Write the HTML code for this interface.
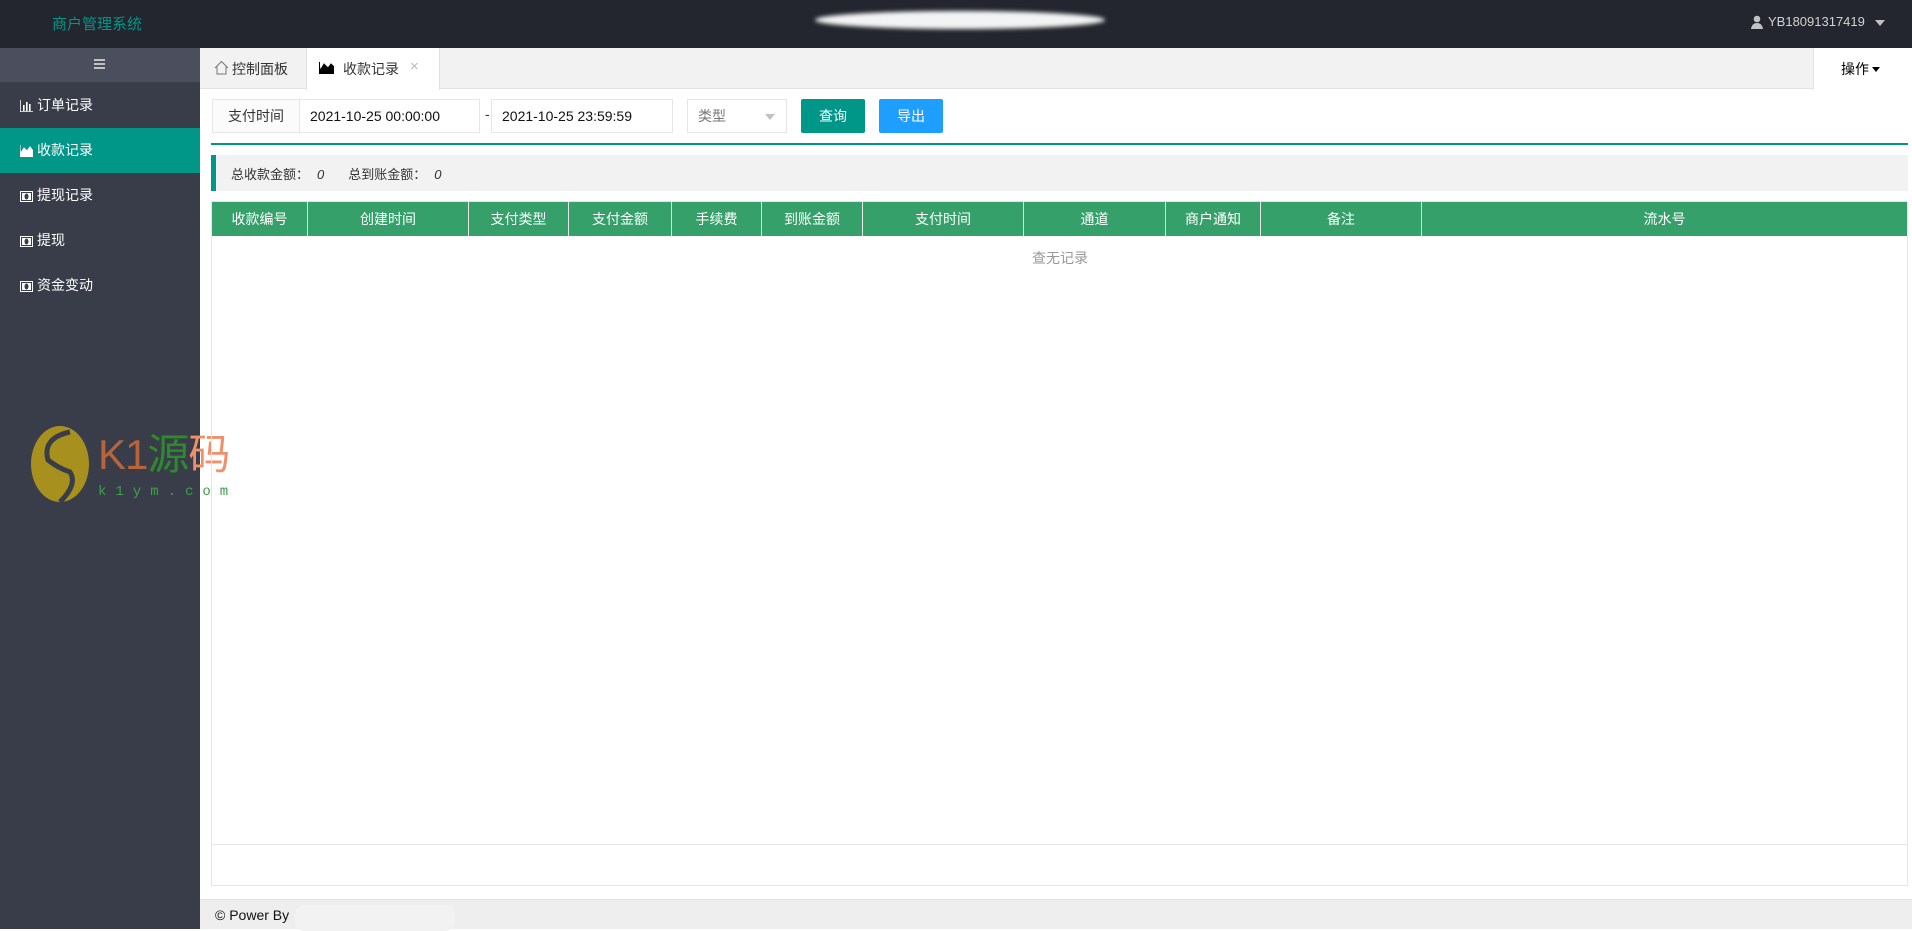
<!DOCTYPE html>
<html><head><meta charset="utf-8"><style>
*{margin:0;padding:0;box-sizing:border-box}
body{width:1912px;height:929px;position:relative;overflow:hidden;background:#fff;font-family:"Liberation Sans","Noto Sans CJK SC",sans-serif;font-size:14px;color:#333}
.a{position:absolute}
.hdr{left:0;top:0;width:1912px;height:48px;background:#23262e}
.side{left:0;top:48px;width:200px;height:881px;background:#393d49}
.mi{position:absolute;left:0;width:200px;height:45px;line-height:45px;color:#fff;font-size:14px;padding-left:20px}
.mi svg{vertical-align:-2px;margin-right:4px}
.th{position:absolute;top:0;height:34px;line-height:34px;text-align:center;color:#fff;font-size:14px;border-right:1px solid #e6e6e6}
</style></head><body>
<div class="a hdr"></div>
<div class="a" style="left:52px;top:13px;color:#009688;font-size:15px">商户管理系统</div>
<div class="a" style="left:815px;top:11px;width:290px;height:18px;background:#fff;border-radius:50%;filter:blur(2px);opacity:.95"></div>
<svg class="a" style="left:1751px;top:15px" width="12" height="14" viewBox="0 0 12 14"><circle cx="6" cy="4" r="3.3" fill="#c2c2c2"/><path d="M0 14 Q1 8 6 8 Q11 8 12 14Z" fill="#c2c2c2"/></svg>
<div class="a" style="left:1768px;top:14px;color:#d2d2d2;font-size:13px">YB18091317419</div>
<div class="a" style="left:1875px;top:20px;width:0;height:0;border-left:5px solid transparent;border-right:5px solid transparent;border-top:6px solid #c2c2c2"></div>

<div class="a side"></div>
<div class="a" style="left:0;top:48px;width:200px;height:34px;background:#4a4e5d"></div>
<div class="a" style="left:94px;top:59px;width:11px;height:2px;background:#c2c2c2;box-shadow:0 4px 0 #c2c2c2,0 8px 0 #c2c2c2"></div>
<div class="mi" style="top:83px"><svg width="13" height="12"><path d="M0 0V12H13" stroke="#fff" stroke-width="1.5" fill="none"/><rect x="3" y="5" width="1.6" height="6" fill="#fff"/><rect x="6" y="2" width="1.6" height="9" fill="#fff"/><rect x="9" y="4" width="1.6" height="7" fill="#fff"/></svg>订单记录</div>
<div class="mi" style="top:128px;background:#009688"><svg width="13" height="12"><path d="M0 0V12H13V6L10 2L7 6L4 3L1 8" stroke="#fff" fill="#fff"/></svg>收款记录</div>
<div class="mi" style="top:173px"><svg width="13" height="11"><rect x=".5" y=".5" width="12" height="10" fill="none" stroke="#fff"/><rect x="2" y="2" width="9" height="7" fill="#fff"/><ellipse cx="6.5" cy="5.5" rx="2" ry="3" fill="#393d49"/></svg>提现记录</div>
<div class="mi" style="top:218px"><svg width="13" height="11"><rect x=".5" y=".5" width="12" height="10" fill="none" stroke="#fff"/><rect x="2" y="2" width="9" height="7" fill="#fff"/><ellipse cx="6.5" cy="5.5" rx="2" ry="3" fill="#393d49"/></svg>提现</div>
<div class="mi" style="top:263px"><svg width="13" height="11"><rect x=".5" y=".5" width="12" height="10" fill="none" stroke="#fff"/><rect x="2" y="2" width="9" height="7" fill="#fff"/><ellipse cx="6.5" cy="5.5" rx="2" ry="3" fill="#393d49"/></svg>资金变动</div>

<!-- watermark -->
<svg class="a" style="left:30px;top:424px" width="62" height="80"><ellipse cx="30" cy="40" rx="29" ry="38" fill="#a8901f"/><path d="M40 8 Q12 14 18 36 Q28 44 40 48 Q48 60 30 78" stroke="#393d49" stroke-width="5" fill="none"/></svg>
<div class="a" style="left:98px;top:432px;font-size:42px;color:#b8643a;line-height:46px;letter-spacing:-1px">K1<span style="color:#2e8a2e">源</span><span style="color:#f0906a">码</span></div>
<div class="a" style="left:98px;top:484px;font-size:14px;color:#3aa04a;letter-spacing:9px;font-family:'Liberation Mono',monospace">k1ym.com</div>

<!-- tabs -->
<div class="a" style="left:200px;top:48px;width:1712px;height:41px;background:#f2f2f2;border-bottom:1px solid #e2e2e2"></div>
<svg class="a" style="left:214px;top:60px" width="15" height="15"><path d="M1 8L7.5 1.5L14 8M3 6.5V14H12V6.5" stroke="#777" fill="none"/></svg>
<div class="a" style="left:232px;top:59px;font-size:14px;color:#333">控制面板</div>
<div class="a" style="left:306px;top:48px;width:134px;height:42px;background:#fff;border-left:1px solid #e2e2e2;border-right:1px solid #e2e2e2"></div>
<svg class="a" style="left:319px;top:62px" width="15" height="12"><path d="M0.5 0V11.5H15V5L12 2L9 6L5 2L1.5 8" stroke="#000" fill="#000"/></svg>
<div class="a" style="left:343px;top:59px;font-size:14px;color:#333">收款记录</div>
<div class="a" style="left:410px;top:58px;font-size:15px;color:#bbb">×</div>
<div class="a" style="left:1813px;top:48px;width:99px;height:42px;background:#fff;border-left:1px solid #e2e2e2"></div>
<div class="a" style="left:1841px;top:59px;font-size:14px;color:#000">操作</div>
<div class="a" style="left:1872px;top:67px;border-left:4px solid transparent;border-right:4px solid transparent;border-top:5px solid #000"></div>

<!-- search -->
<div class="a" style="left:212px;top:99px;width:88px;height:34px;background:#fbfbfb;border:1px solid #e6e6e6;line-height:32px;text-align:center;font-size:14px">支付时间</div>
<div class="a" style="left:299px;top:99px;width:181px;height:34px;border:1px solid #e6e6e6;line-height:32px;padding-left:10px;font-size:14px;color:#111">2021-10-25 00:00:00</div>
<div class="a" style="left:485px;top:106px;font-size:14px">-</div>
<div class="a" style="left:491px;top:99px;width:182px;height:34px;border:1px solid #e6e6e6;line-height:32px;padding-left:10px;font-size:14px;color:#111">2021-10-25 23:59:59</div>
<div class="a" style="left:687px;top:99px;width:100px;height:34px;border:1px solid #e6e6e6;line-height:32px;padding-left:10px;font-size:14px;color:#777">类型</div>
<div class="a" style="left:765px;top:114px;border-left:5px solid transparent;border-right:5px solid transparent;border-top:6px solid #c2c2c2"></div>
<div class="a" style="left:801px;top:99px;width:64px;height:34px;background:#009688;border-radius:2px;color:#fff;line-height:34px;text-align:center;font-size:14px">查询</div>
<div class="a" style="left:879px;top:99px;width:64px;height:34px;background:#1e9fff;border-radius:2px;color:#fff;line-height:34px;text-align:center;font-size:14px">导出</div>
<div class="a" style="left:211px;top:143px;width:1697px;height:2px;background:#009688"></div>

<!-- summary -->
<div class="a" style="left:211px;top:155px;width:1697px;height:36px;background:#f2f2f2;border-left:5px solid #009688"></div>
<div class="a" style="left:231px;top:164px;font-size:13px;color:#333">总收款金额：<i style="margin-left:8px">0</i><span style="margin-left:24px">总到账金额：</span><i style="margin-left:8px">0</i></div>

<!-- table -->
<div class="a" style="left:211px;top:201px;width:1697px;height:685px;border:1px solid #e6e6e6"></div>
<div class="a" style="left:212px;top:202px;width:1695px;height:34px;background:#36a06a">
<div class="th" style="left:0;width:96px">收款编号</div>
<div class="th" style="left:96px;width:161px">创建时间</div>
<div class="th" style="left:257px;width:100px">支付类型</div>
<div class="th" style="left:357px;width:103px">支付金额</div>
<div class="th" style="left:460px;width:90px">手续费</div>
<div class="th" style="left:550px;width:101px">到账金额</div>
<div class="th" style="left:651px;width:161px">支付时间</div>
<div class="th" style="left:812px;width:142px">通道</div>
<div class="th" style="left:954px;width:95px">商户通知</div>
<div class="th" style="left:1049px;width:161px">备注</div>
<div class="th" style="left:1210px;width:485px;border-right:none">流水号</div>
</div>
<div class="a" style="left:1032px;top:248px;font-size:14px;color:#999">查无记录</div>
<div class="a" style="left:212px;top:844px;width:1695px;height:1px;background:#e6e6e6"></div>

<!-- footer -->
<div class="a" style="left:200px;top:899px;width:1712px;height:30px;background:#eee;border-top:1px solid #e2e2e2"></div>
<div class="a" style="left:215px;top:907px;font-size:14px;color:#111">© Power By</div>
<div class="a" style="left:295px;top:905px;width:160px;height:26px;background:#f2f2f2;border-radius:10px"></div>
</body></html>
